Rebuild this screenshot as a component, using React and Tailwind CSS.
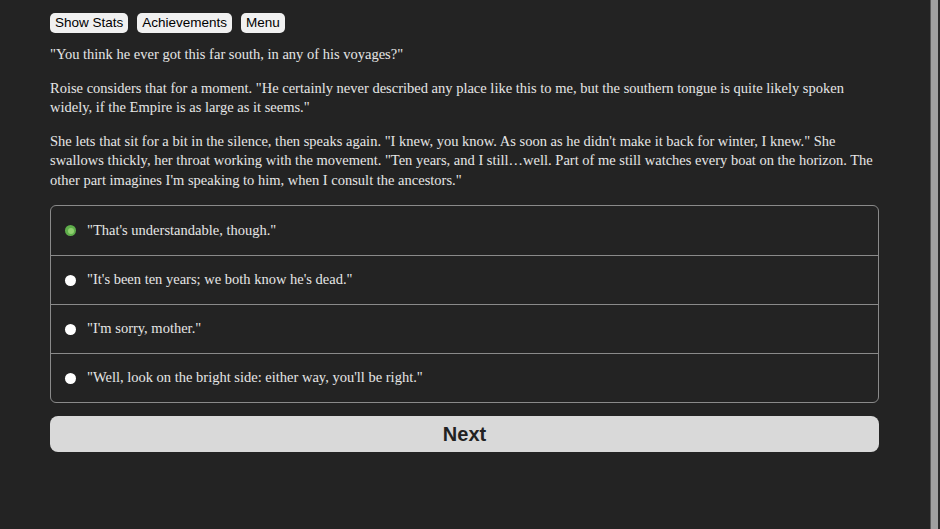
import React, { useState } from "react";

const choices = [
  "\"That's understandable, though.\"",
  "\"It's been ten years; we both know he's dead.\"",
  "\"I'm sorry, mother.\"",
  "\"Well, look on the bright side: either way, you'll be right.\"",
];

const serif = { fontFamily: "'Liberation Serif', 'Times New Roman', serif" };

export default function App() {
  const [picked, setPicked] = useState(0);

  return (
    <div className="flex h-[529px] w-full overflow-hidden bg-[#232323]">
      <div className="flex-1 pl-[50px] pr-[51px] pt-[13px]">
        {/* top buttons */}
        <div
          className="flex gap-[9px] text-[13.5px] text-black"
          style={{ fontFamily: "'Liberation Sans', Arial, sans-serif" }}
        >
          <button className="h-[20px] rounded-[5px] bg-[#f0f0f0] px-[5px] leading-[20px]">
            Show Stats
          </button>
          <button className="h-[20px] rounded-[5px] bg-[#f0f0f0] px-[5px] leading-[20px]">
            Achievements
          </button>
          <button className="h-[20px] rounded-[5px] bg-[#f0f0f0] px-[5px] leading-[20px]">
            Menu
          </button>
        </div>

        {/* story text */}
        <div
          className="mt-[12px] text-[14.5px] leading-[19.5px] text-[#e6e6e6]"
          style={serif}
        >
          <p>"You think he ever got this far south, in any of his voyages?"</p>
          <p className="mt-[14px]">
            Roise considers that for a moment. "He certainly never described any
            place like this to me, but the southern tongue is quite likely spoken
            widely, if the Empire is as large as it seems."
          </p>
          <p className="mt-[14px]">
            She lets that sit for a bit in the silence, then speaks again. "I
            knew, you know. As soon as he didn't make it back for winter, I
            knew." She swallows thickly, her throat working with the movement.
            "Ten years, and I still…well. Part of me still watches every boat on
            the horizon. The other part imagines I'm speaking to him, when I
            consult the ancestors."
          </p>
        </div>

        {/* choices */}
        <div className="mt-[15px] overflow-hidden rounded-[6px] border border-[#8a8a8a]">
          {choices.map((c, i) => (
            <label
              key={i}
              onClick={() => setPicked(i)}
              className={`flex h-[49px] cursor-pointer items-center pl-[14px] ${
                i > 0 ? "border-t border-[#8a8a8a]" : ""
              }`}
            >
              <span
                className={`flex h-[11px] w-[11px] items-center justify-center rounded-full ${
                  picked === i ? "bg-[#5fae4b]" : "bg-white"
                }`}
              >
                {picked === i && (
                  <span className="h-[6px] w-[6px] rounded-full bg-[#8fd06f]" />
                )}
              </span>
              <span
                className="ml-[11px] text-[14.5px] text-[#e6e6e6]"
                style={serif}
              >
                {c}
              </span>
            </label>
          ))}
        </div>

        <button
          className="mt-[13px] h-[36px] w-full rounded-[8px] bg-[#d9d9d9] text-[20px] font-bold text-[#222]"
          style={{ fontFamily: "'Liberation Sans', Arial, sans-serif" }}
        >
          Next
        </button>
      </div>

      {/* scroll strip */}
      <div className="flex w-[10px]">
        <div className="w-[1px] bg-[#5a5a5a]" />
        <div className="w-[7px] bg-[#a0a0a0]" />
        <div className="w-[2px] bg-[#2a2a2a]" />
      </div>
    </div>
  );
}
